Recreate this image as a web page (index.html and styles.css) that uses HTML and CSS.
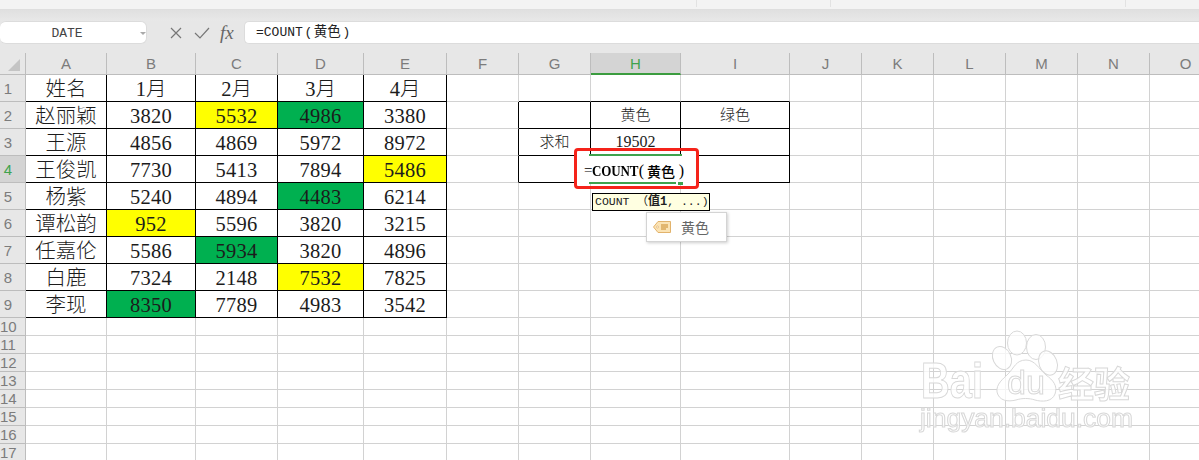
FILE: index.html
```html
<!DOCTYPE html>
<html lang="zh-CN">
<head>
<meta charset="utf-8">
<title>COUNT</title>
<link rel="stylesheet" href="styles.css">
</head>
<body>
<div class="ribbon"><i class="rib-sep s1"></i><i class="rib-sep s2"></i><i class="rib-sep s3"></i></div>
<div class="ribbon-fade"></div>
<div class="formula-bar">
  <div class="name-box"><span class="name-text">DATE</span><span class="name-arrow"></span></div>
  <div class="fx-tools">
    <svg class="tool" width="14" height="14" viewBox="0 0 14 14"><path d="M2 2l10 10M12 2L2 12" stroke="#777" stroke-width="1.2" fill="none"/></svg>
    <svg class="tool" width="16" height="14" viewBox="0 0 16 14"><path d="M1 7l5 5L15 2" stroke="#777" stroke-width="1.2" fill="none"/></svg>
    <span class="fx">fx</span>
  </div>
  <div class="formula-input">=COUNT<span class="fi-p">(</span><span class="fi-arg">黄色</span><span class="fi-p">)</span></div>
</div>
<table class="sheet">
<colgroup><col class="c26"><col class="c81"><col class="c89"><col class="c82"><col class="c86"><col class="c83"><col class="c72"><col class="c72"><col class="c90"><col class="c109"><col class="c72"><col class="c72"><col class="c72"><col class="c72"><col class="c72"><col class="c72"></colgroup>
<tr class="head"><th class="corner"><div><svg width="12" height="12" viewBox="0 0 12 12"><path d="M12 0v12H0z" fill="#c4c4c4"/></svg></div></th><th><div>A</div></th><th><div>B</div></th><th><div>C</div></th><th><div>D</div></th><th><div>E</div></th><th><div>F</div></th><th><div>G</div></th><th class="sel"><div>H</div></th><th><div>I</div></th><th><div>J</div></th><th><div>K</div></th><th><div>L</div></th><th><div>M</div></th><th><div>N</div></th><th><div>O</div></th></tr>
<tr class="r27"><th class="num">1</th><td class="k cn">姓名</td><td class="k cn">1月</td><td class="k cn">2月</td><td class="k cn">3月</td><td class="k cn">4月</td><td></td><td class="kb"></td><td class="kb"></td><td class="kb"></td><td></td><td></td><td></td><td></td><td></td><td></td></tr>
<tr class="r27"><th class="num">2</th><td class="k cn">赵丽颖</td><td class="k">3820</td><td class="k y">5532</td><td class="k g">4986</td><td class="k">3380</td><td class="kr"></td><td class="k sm"></td><td class="k sm">黄色</td><td class="k sm">绿色</td><td></td><td></td><td></td><td></td><td></td><td></td></tr>
<tr class="r27"><th class="num">3</th><td class="k cn">王源</td><td class="k">4856</td><td class="k">4869</td><td class="k">5972</td><td class="k">8972</td><td class="kr"></td><td class="k sm">求和</td><td class="k val">19502</td><td class="k sm"></td><td></td><td></td><td></td><td></td><td></td><td></td></tr>
<tr class="r27"><th class="num act">4</th><td class="k cn">王俊凯</td><td class="k">7730</td><td class="k">5413</td><td class="k">7894</td><td class="k y">5486</td><td class="kr"></td><td class="k"></td><td class="k"></td><td class="k"></td><td></td><td></td><td></td><td></td><td></td><td></td></tr>
<tr class="r27"><th class="num">5</th><td class="k cn">杨紫</td><td class="k">5240</td><td class="k">4894</td><td class="k g">4483</td><td class="k">6214</td><td></td><td></td><td></td><td></td><td></td><td></td><td></td><td></td><td></td><td></td></tr>
<tr class="r27"><th class="num">6</th><td class="k cn">谭松韵</td><td class="k y">952</td><td class="k">5596</td><td class="k">3820</td><td class="k">3215</td><td></td><td></td><td></td><td></td><td></td><td></td><td></td><td></td><td></td><td></td></tr>
<tr class="r27"><th class="num">7</th><td class="k cn">任嘉伦</td><td class="k">5586</td><td class="k g">5934</td><td class="k">3820</td><td class="k">4896</td><td></td><td></td><td></td><td></td><td></td><td></td><td></td><td></td><td></td><td></td></tr>
<tr class="r27"><th class="num">8</th><td class="k cn">白鹿</td><td class="k">7324</td><td class="k">2148</td><td class="k y">7532</td><td class="k">7825</td><td></td><td></td><td></td><td></td><td></td><td></td><td></td><td></td><td></td><td></td></tr>
<tr class="r27"><th class="num">9</th><td class="k cn">李现</td><td class="k g">8350</td><td class="k">7789</td><td class="k">4983</td><td class="k">3542</td><td></td><td></td><td></td><td></td><td></td><td></td><td></td><td></td><td></td><td></td></tr>
<tr class="r18"><th class="num">10</th><td></td><td></td><td></td><td></td><td></td><td></td><td></td><td></td><td></td><td></td><td></td><td></td><td></td><td></td><td></td></tr>
<tr class="r18"><th class="num">11</th><td></td><td></td><td></td><td></td><td></td><td></td><td></td><td></td><td></td><td></td><td></td><td></td><td></td><td></td><td></td></tr>
<tr class="r18"><th class="num">12</th><td></td><td></td><td></td><td></td><td></td><td></td><td></td><td></td><td></td><td></td><td></td><td></td><td></td><td></td><td></td></tr>
<tr class="r18"><th class="num">13</th><td></td><td></td><td></td><td></td><td></td><td></td><td></td><td></td><td></td><td></td><td></td><td></td><td></td><td></td><td></td></tr>
<tr class="r18"><th class="num">14</th><td></td><td></td><td></td><td></td><td></td><td></td><td></td><td></td><td></td><td></td><td></td><td></td><td></td><td></td><td></td></tr>
<tr class="r18"><th class="num">15</th><td></td><td></td><td></td><td></td><td></td><td></td><td></td><td></td><td></td><td></td><td></td><td></td><td></td><td></td><td></td></tr>
<tr class="r18"><th class="num">16</th><td></td><td></td><td></td><td></td><td></td><td></td><td></td><td></td><td></td><td></td><td></td><td></td><td></td><td></td><td></td></tr>
<tr class="r18"><th class="num">17</th><td></td><td></td><td></td><td></td><td></td><td></td><td></td><td></td><td></td><td></td><td></td><td></td><td></td><td></td><td></td></tr>
</table>

<div class="editor"><span class="eq">=</span><b class="fn">COUNT</b><span class="paren p1">(</span><b class="arg">黄色</b><span class="paren p2">)</span></div>
<div class="edit-top"></div>
<div class="edit-bottom"></div>
<div class="edit-handle"></div>
<div class="red-box"></div>
<div class="tip">COUNT （<b>值1</b>, ...)</div>
<div class="suggest">
  <svg width="18" height="12" viewBox="0 0 18 12"><path d="M5 .5h12.5v11H5L.5 6z" fill="#fbe3b4" stroke="#e2b36c"/><circle cx="4.5" cy="6" r="1" fill="#fff" stroke="#d9a75f" stroke-width=".6"/><path d="M8 4h7M8 6h7M8 8h5" stroke="#c98a2c" stroke-width="1"/></svg>
  <span>黄色</span>
</div>
<svg class="mark" width="230" height="115" viewBox="0 0 230 115">
  <defs><filter id="soft" x="-5%" y="-5%" width="110%" height="110%"><feGaussianBlur stdDeviation=".5"/></filter></defs>
  <g filter="url(#soft)" fill="#fff" fill-opacity=".75" stroke="#d8d8d8" stroke-width="1">
    <ellipse cx="97" cy="12" rx="9.5" ry="12"/>
    <ellipse cx="116" cy="16" rx="9.5" ry="12.5"/>
    <ellipse cx="82" cy="27" rx="9" ry="12" transform="rotate(-25 82 27)"/>
    <ellipse cx="128" cy="32" rx="9" ry="12.5" transform="rotate(-20 128 32)"/>
    <path transform="translate(46 -2)" d="M60 31c9 0 13 9 20 15 7 5 12 11 9 19-3 8-13 8-20 6-6-2-13-2-19 0-8 2-17 1-19-8-1-8 6-13 11-18 6-6 8-14 18-14z"/>
    <text class="mk-bai" x="1" y="67" textLength="62" lengthAdjust="spacingAndGlyphs">Bai</text>
    <text class="mk-du" x="87" y="63" textLength="38" lengthAdjust="spacingAndGlyphs">du</text>
    <text class="mk-cn" x="138" y="67" textLength="72" lengthAdjust="spacingAndGlyphs">经验</text>
    <text class="mk-url" x="0" y="96" textLength="213" lengthAdjust="spacingAndGlyphs">jingyan.baidu.com</text>
  </g>
</svg>
</body>
</html>
```
FILE: styles.css
```css
* { box-sizing: border-box; }
html, body { margin: 0; height: 460px; overflow: hidden; background: #fff; }
body { position: relative; width: 1199px; font-family: "Liberation Serif", "Noto Sans CJK SC", serif; color: #111; }

.ribbon { height: 10px; background: #f3f3f3; border-bottom: 1px solid #dedede; display: flex; }
.rib-sep { display: block; width: 1px; height: 7px; background: #e2e2e2; }
.s1 { margin-left: 696px; }
.s2 { margin-left: 133px; }
.s3 { margin-left: 294px; }
.ribbon-fade { height: 11px; background: linear-gradient(#e0e0e0, #e8e8e8); }

.formula-bar { height: 23px; background: #e7e7e7; display: flex; align-items: stretch; }
.name-box { width: 147px; height: 23px; background: #fff; border: 1px solid #dcdcdc; border-left: 0; border-radius: 6px; display: flex; align-items: center; position: relative; }
.name-text { width: 134px; padding-top: 2px; text-align: center; font: 13px "Liberation Mono", monospace; color: #444; }
.name-arrow { width: 0; height: 0; margin: 2px 0 0 6px; border: 3px solid transparent; border-top: 3px solid #aaa; border-bottom: 0; }
.fx-tools { width: 97px; display: flex; align-items: center; padding-left: 22px; gap: 11px; }
.tool { flex: none; }
.fx { font: italic 19px "Liberation Serif", serif; color: #666; margin-left: -1px; }
.formula-input { flex: 1; background: #fff; border: 1px solid #dcdcdc; border-right: 0; border-radius: 5px 0 0 5px; font: 13px/22px "Liberation Mono", "Noto Sans CJK SC", monospace; color: #222; padding-left: 11px; }
.fi-p { display: inline-block; width: 11px; text-align: center; }
.fi-arg { font-size: 13.5px; }

.sheet { border-collapse: separate; border-spacing: 0; table-layout: fixed; width: 1222px; background: #fff; }
.c26 { width: 26px; } .c81 { width: 81px; } .c82 { width: 82px; } .c83 { width: 83px; } .c86 { width: 86px; } .c89 { width: 89px; } .c72 { width: 72px; } .c90 { width: 90px; } .c109 { width: 109px; }
.head { height: 31px; }
.head th { padding: 9px 0 0; background: #e7e7e7; border-bottom: 1px solid #bdbdbd; vertical-align: top; font: 400 15px/21px "Liberation Sans", sans-serif; color: #7c7c7c; }
.head th div { height: 21px; border-right: 1px solid #bdbdbd; text-align: center; }
.head th.corner div { padding: 6px 0 0 8px; }
.corner svg { display: block; }
.head th.sel { color: #3fa34d; }
.head th.sel div { background: #d4d4d4; border-bottom: 2px solid #3b9c3f; height: 22px; margin-bottom: -1px; }
.r27 { height: 27px; }
.r18 { height: 18px; }
td { padding: 2px 0 0; border-right: 1px solid #d2d2d2; border-bottom: 1px solid #d2d2d2; text-align: center; font: 20.5px/1 "Liberation Serif", "Noto Sans CJK SC", serif; letter-spacing: .2px; color: #1c1c1c; overflow: hidden; white-space: nowrap; }
.num { padding: 0 9px 0 0; background: #e7e7e7; border-right: 1px solid #bdbdbd; border-bottom: 1px solid #bdbdbd; font: 400 15px/1 "Liberation Sans", sans-serif; color: #7c7c7c; text-align: center; white-space: nowrap; overflow: visible; }
.num.act { color: #3fa34d; background: #d4d4d4; }
.k { border-right-color: #000; border-bottom-color: #000; }
.kr { border-right-color: #000; }
.kb { border-bottom-color: #000; }
.cn { font-size: 20.5px; font-weight: 300; letter-spacing: 0; }
.sm { padding-top: 0; font-size: 15px; font-weight: 300; letter-spacing: 0; }
.val { font-size: 16px; letter-spacing: 0; vertical-align: top; padding-top: 5px; }
.y { background: #ffff00; }
.g { background: #00b050; }

.editor { position: absolute; left: 577px; top: 155px; width: 120px; height: 28px; background: #fff; padding: 3px 0 0 7px; display: flex; align-items: center; font: 15px "Liberation Serif", "Noto Sans CJK SC", serif; color: #000; }
.eq { width: 8px; }
.fn { display: block; width: 44px; font-size: 15.5px; letter-spacing: -.2px; transform: scaleX(.84); transform-origin: left center; white-space: nowrap; }
.paren { font-size: 16px; text-align: center; }
.p1 { width: 11px; }
.p2 { width: 13px; }
.arg { font-size: 14px; font-weight: 500; }
.edit-top { position: absolute; left: 589px; top: 154px; width: 93px; height: 2px; background: #3fa34d; }
.edit-bottom { position: absolute; left: 589px; top: 182px; width: 87px; height: 2px; background: #3fa34d; }
.edit-handle { position: absolute; left: 678px; top: 182px; width: 5px; height: 3px; background: #3fa34d; }
.red-box { position: absolute; left: 574px; top: 148px; width: 125px; height: 41px; border: 3px solid #f5231a; border-radius: 4px; }
.tip { position: absolute; left: 592px; top: 193px; width: 118px; height: 18px; background: #ffffe1; border: 1px solid #000; padding-left: 2px; font: 11.5px/16px "Liberation Mono", "Noto Sans CJK SC", monospace; white-space: pre; color: #222; }
.tip b { font-size: 12px; }
.suggest { position: absolute; left: 646px; top: 212px; width: 81px; height: 30px; background: #fff; border: 1px solid #d4d4d4; box-shadow: 1px 1px 3px rgba(0,0,0,.2); display: flex; align-items: center; padding-left: 6px; gap: 10px; font: 14px "Noto Sans CJK SC", sans-serif; color: #666; }
.mark { position: absolute; left: 920px; top: 331px; overflow: visible; }
.mk-bai { font: 700 50px "Liberation Sans", sans-serif; }
.mk-du { font: 400 34px "Liberation Sans", sans-serif; }
.mk-cn { font: 700 36px "Noto Sans CJK SC", sans-serif; }
.mk-url { font: 400 25px "Liberation Sans", sans-serif; }
```
